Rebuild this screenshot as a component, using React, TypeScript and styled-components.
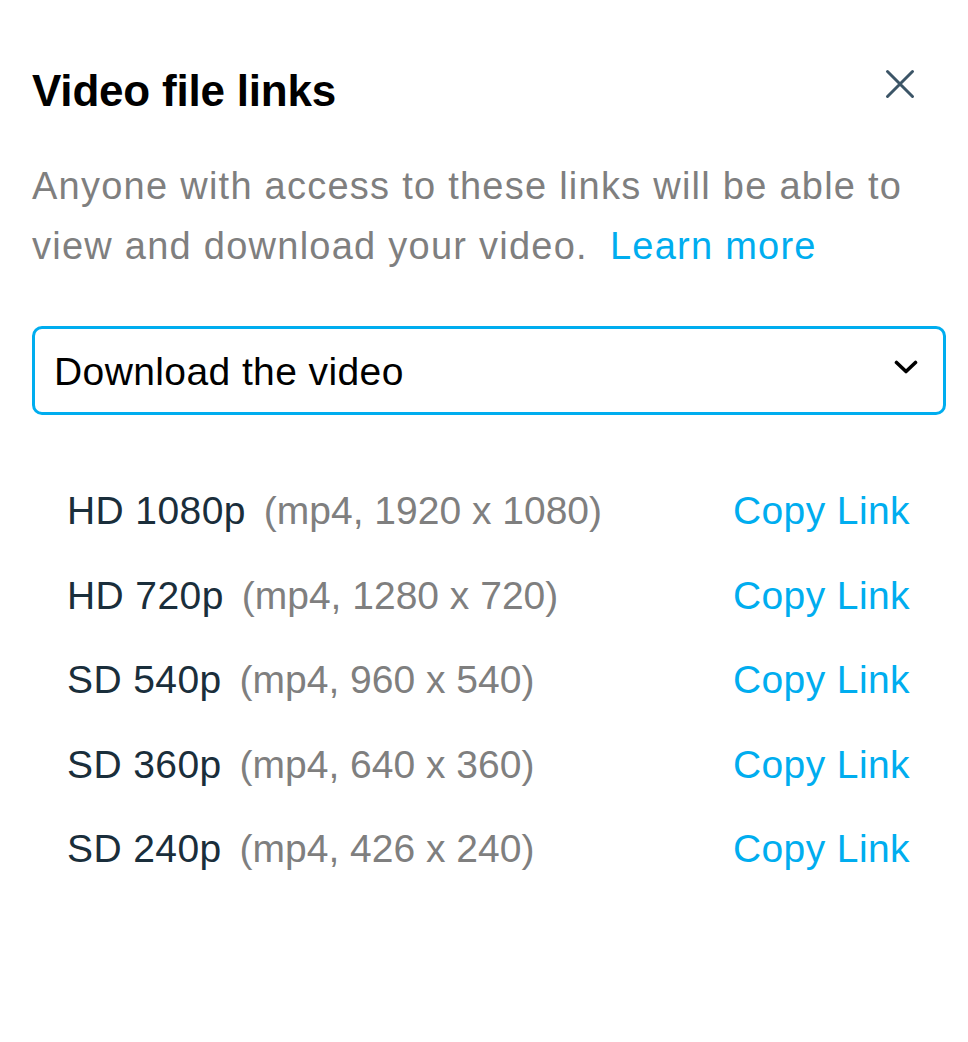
import { createGlobalStyle, styled } from 'styled-components'

const COLORS = {
  black: '#000000',
  ink: '#1a2e3b',
  gray: '#7f7f7f',
  blue: '#00adef',
  slate: '#3c5567',
}

type Quality = {
  label: string
  detail: string
}

const qualities: Quality[] = [
  { label: 'HD 1080p', detail: '(mp4, 1920 x 1080)' },
  { label: 'HD 720p', detail: '(mp4, 1280 x 720)' },
  { label: 'SD 540p', detail: '(mp4, 960 x 540)' },
  { label: 'SD 360p', detail: '(mp4, 640 x 360)' },
  { label: 'SD 240p', detail: '(mp4, 426 x 240)' },
]

const GlobalStyle = createGlobalStyle`
  html, body {
    margin: 0;
    padding: 0;
    background: #fff;
  }
  body {
    font-family: "Liberation Sans", Arial, Helvetica, sans-serif;
    -webkit-font-smoothing: antialiased;
  }
`

const App = () => {
  return (
    <>
      <GlobalStyle />
      <Panel>
        <Header>
          <Title>Video file links</Title>
          <CloseButton aria-label="Close">
            <svg width="32" height="32" viewBox="0 0 32 32">
              <path
                d="M3.5 3.5 L28.5 28.5 M28.5 3.5 L3.5 28.5"
                stroke={COLORS.slate}
                strokeWidth="3"
                strokeLinecap="round"
                fill="none"
              />
            </svg>
          </CloseButton>
        </Header>

        <Description>
          <Line>Anyone with access to these links will be able to</Line>
          <Line>
            <span>view and download your video.</span>
            <LearnMore href="#">Learn more</LearnMore>
          </Line>
        </Description>

        <Select>
          <span>Download the video</span>
          <svg width="24" height="14" viewBox="0 0 24 14">
            <path
              d="M2.5 2.5 L12 11.5 L21.5 2.5"
              stroke={COLORS.black}
              strokeWidth="3.6"
              strokeLinecap="round"
              strokeLinejoin="round"
              fill="none"
            />
          </svg>
        </Select>

        <LinkList>
          {qualities.map((item) => {
            return (
              <LinkRow key={item.label}>
                <div>
                  <Label>{item.label}</Label>
                  <Detail>{item.detail}</Detail>
                </div>
                <CopyLink href="#">Copy Link</CopyLink>
              </LinkRow>
            )
          })}
        </LinkList>
      </Panel>
    </>
  )
}

const Panel = styled.div`
  box-sizing: border-box;
  width: 968px;
  min-height: 1042px;
  padding: 65px 22px 0 32px;
  background: #fff;
`

const Header = styled.div`
  display: flex;
  justify-content: space-between;
  align-items: flex-start;
`

const Title = styled.h1`
  margin: 0;
  font-size: 44px;
  line-height: 52px;
  font-weight: 700;
  letter-spacing: -0.2px;
  color: ${COLORS.black};
`

const CloseButton = styled.button`
  display: flex;
  padding: 0;
  margin: 3px 30px 0 0;
  border: none;
  background: none;
  cursor: pointer;
`

const Description = styled.div`
  margin: 39px 0 0;
  font-size: 38px;
  line-height: 60px;
  letter-spacing: 1.25px;
  color: ${COLORS.gray};
`

const Line = styled.div`
  display: flex;
  gap: 22px;
  white-space: nowrap;
`

const LearnMore = styled.a`
  color: ${COLORS.blue};
  text-decoration: none;
`

const Select = styled.div`
  box-sizing: border-box;
  display: flex;
  align-items: center;
  justify-content: space-between;
  height: 89px;
  margin-top: 50px;
  padding: 0 25px 0 19px;
  border: 3px solid ${COLORS.blue};
  border-radius: 10px;
  font-size: 39px;
  letter-spacing: 0.4px;
  color: ${COLORS.black};

  span {
    margin-top: 3px;
  }

  svg {
    margin-top: -8px;
  }
`

const LinkList = styled.div`
  display: flex;
  flex-direction: column;
  margin-top: 54px;
  padding: 0 36px 0 35px;
`

const LinkRow = styled.div`
  display: flex;
  align-items: center;
  justify-content: space-between;
  height: 84.5px;
  font-size: 39px;
  letter-spacing: 0.4px;
  white-space: nowrap;
`

const Label = styled.span`
  color: ${COLORS.ink};
`

const Detail = styled.span`
  margin-left: 18px;
  letter-spacing: 0;
  color: ${COLORS.gray};
`

const CopyLink = styled.a`
  color: ${COLORS.blue};
  text-decoration: none;
  cursor: pointer;
`

export default App
